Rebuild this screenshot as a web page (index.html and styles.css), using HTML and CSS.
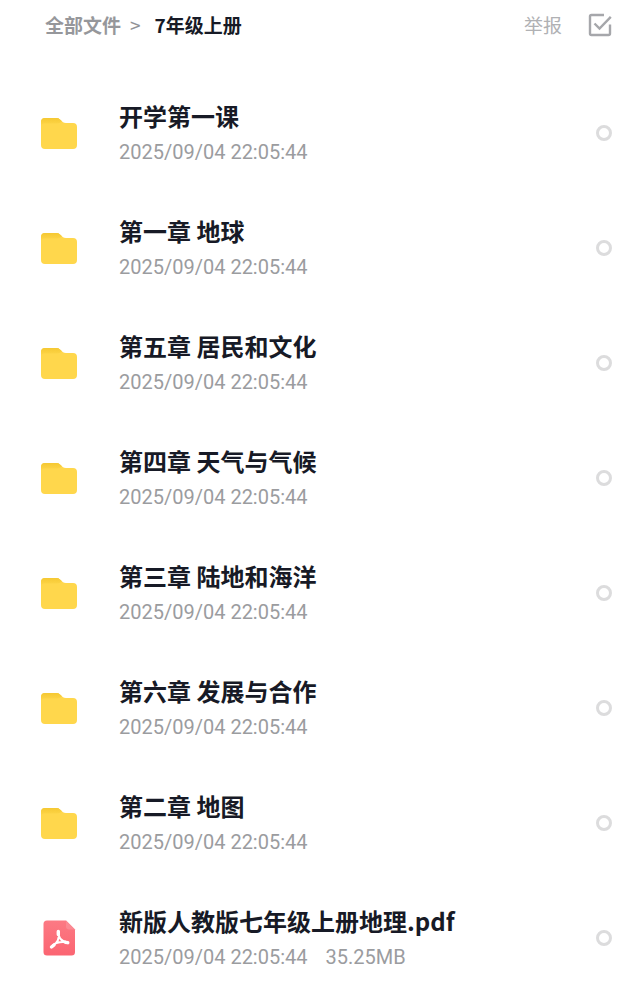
FILE: index.html
```
<!DOCTYPE html>
<html lang="zh-CN">
<head>
  <meta charset="UTF-8" />
  <title>7年级上册</title>
  <meta name="viewport" content="width=device-width, initial-scale=1.0">
  <link rel="stylesheet" href="styles.css">
</head>
<body>
  <svg class="sprite" aria-hidden="true">
    <defs>
      <linearGradient id="flap" x1="0" y1="0" x2="0" y2="1">
        <stop offset="0" stop-color="#f5c832"/>
        <stop offset="1" stop-color="#ffd74c"/>
      </linearGradient>
      <linearGradient id="sheet" x1="0" y1="0" x2="0" y2="1">
        <stop offset="0" stop-color="#fc7a84"/>
        <stop offset="1" stop-color="#fb6572"/>
      </linearGradient>
    </defs>
    <symbol id="folder" viewBox="0 0 38 38">
      <path d="M1 8Q1 4 5 4H16.500Q18.500 4 20 5.400L23 8.200Q24 9 26 9H33Q37 9 37 13V31Q37 35 33 35H5Q1 35 1 31Z" fill="#ffd74c"/>
      <path d="M1 8Q1 4 5 4H16.500Q18.500 4 20 5.400L22 7.300Q20 9.500 17 9.500H4Q1.500 9.500 1 12Z" fill="url(#flap)"/>
    </symbol>
    <symbol id="pdf" viewBox="0 0 38 38">
      <path d="M7 1.500H26L35 10.500V33Q35 36.500 31.500 36.500H7Q3.500 36.500 3.500 33V5Q3.500 1.500 7 1.500Z" fill="url(#sheet)"/>
      <path d="M26 1.500L35 10.500H29Q26 10.500 26 7.500Z" fill="#fb8a93"/>
      <path d="M18.500 12.500C18 17 20 22.500 28 23.500M18.500 12.500C20 19 17 24.500 11.500 28M13 26C17 22.800 22 22.500 28 23.500" fill="none" stroke="#fff" stroke-width="2" stroke-linecap="round"/>
      <path d="M18.300 12.500V15.500M25.500 23.300L27.800 23.700M11.500 28L14 26" fill="none" stroke="#fff" stroke-width="3.400" stroke-linecap="round"/>
    </symbol>
  </svg>

  <header class="topbar">
    <nav class="crumbs">
      <a href="#">全部文件</a>
      <span class="arrow">&gt;</span>
      <span class="current">7年级上册</span>
    </nav>
    <button class="report" type="button">举报</button>
    <button class="select-all" type="button" aria-label="全选">
      <svg viewBox="0 0 24 24" fill="none" stroke="#a6a7ab" stroke-width="2.400">
        <path d="M16 2H3.500Q2 2 2 3.500V20.500Q2 22 3.500 22H20.500Q22 22 22 20.500V11.500"/>
        <path d="M6.500 10.500L11.500 15.500L22.800 3.800"/>
      </svg>
    </button>
  </header>

  <ul class="files">
    <li class="file">
      <svg class="icon"><use href="#folder"/></svg>
      <label class="info" for="f1">
        <span class="name">开学第一课</span>
        <span class="meta"><span>2025/09/04 22:05:44</span></span>
      </label>
      <input class="pick" type="checkbox" id="f1">
    </li>
    <li class="file">
      <svg class="icon"><use href="#folder"/></svg>
      <label class="info" for="f2">
        <span class="name">第一章 地球</span>
        <span class="meta"><span>2025/09/04 22:05:44</span></span>
      </label>
      <input class="pick" type="checkbox" id="f2">
    </li>
    <li class="file">
      <svg class="icon"><use href="#folder"/></svg>
      <label class="info" for="f3">
        <span class="name">第五章 居民和文化</span>
        <span class="meta"><span>2025/09/04 22:05:44</span></span>
      </label>
      <input class="pick" type="checkbox" id="f3">
    </li>
    <li class="file">
      <svg class="icon"><use href="#folder"/></svg>
      <label class="info" for="f4">
        <span class="name">第四章 天气与气候</span>
        <span class="meta"><span>2025/09/04 22:05:44</span></span>
      </label>
      <input class="pick" type="checkbox" id="f4">
    </li>
    <li class="file">
      <svg class="icon"><use href="#folder"/></svg>
      <label class="info" for="f5">
        <span class="name">第三章 陆地和海洋</span>
        <span class="meta"><span>2025/09/04 22:05:44</span></span>
      </label>
      <input class="pick" type="checkbox" id="f5">
    </li>
    <li class="file">
      <svg class="icon"><use href="#folder"/></svg>
      <label class="info" for="f6">
        <span class="name">第六章 发展与合作</span>
        <span class="meta"><span>2025/09/04 22:05:44</span></span>
      </label>
      <input class="pick" type="checkbox" id="f6">
    </li>
    <li class="file">
      <svg class="icon"><use href="#folder"/></svg>
      <label class="info" for="f7">
        <span class="name">第二章 地图</span>
        <span class="meta"><span>2025/09/04 22:05:44</span></span>
      </label>
      <input class="pick" type="checkbox" id="f7">
    </li>
    <li class="file">
      <svg class="icon"><use href="#pdf"/></svg>
      <label class="info" for="f8">
        <span class="name">新版人教版七年级上册地理.pdf</span>
        <span class="meta"><span>2025/09/04 22:05:44</span><span>35.25MB</span></span>
      </label>
      <input class="pick" type="checkbox" id="f8">
    </li>
  </ul>
</body>
</html>
```

FILE: styles.css
```
* {
  box-sizing: border-box;
}
body {
  margin: 0;
  background: #fff;
  color: #171a26;
  font-family: "Noto Sans CJK SC", sans-serif;
}
.sprite {
  position: absolute;
  width: 0;
  height: 0;
}
.topbar {
  display: flex;
  align-items: center;
  padding: 11px 28px 12px 45px;
  font-size: 19px;
  line-height: 28px;
}
.crumbs {
  display: flex;
  flex: 1;
  font-weight: 700;
}
.crumbs a {
  color: #96979b;
  text-decoration: none;
}
.arrow {
  margin: 0 14px 0 9px;
  color: #929397;
  font-weight: 400;
}
.report,
.select-all {
  padding: 0;
  border: 0;
  background: none;
  color: #b0b1b4;
  font: inherit;
  cursor: pointer;
}
.select-all {
  width: 24px;
  height: 24px;
  margin-left: 26px;
}
.select-all svg {
  display: block;
}
.files {
  margin: 0;
  padding: 24px 28px 0 40px;
  list-style: none;
}
.file {
  display: flex;
  align-items: center;
  padding: 22px 0 21px;
}
.icon {
  flex: none;
  width: 38px;
  height: 38px;
}
.info {
  flex: 1;
  margin-left: 41px;
}
.name {
  display: block;
  font-size: 24px;
  font-weight: 700;
  line-height: 38px;
}
.meta {
  display: flex;
  gap: 18px;
  color: #9b9c9f;
  font-family: Roboto, "Noto Sans CJK SC", sans-serif;
  font-size: 20px;
  line-height: 34px;
}
.pick {
  appearance: none;
  width: 16px;
  height: 16px;
  margin: 0;
  border: 3px solid #dcdcdd;
  border-radius: 50%;
}
.pick:checked {
  border-color: #ffd74c;
  background: #ffd74c;
}
```
